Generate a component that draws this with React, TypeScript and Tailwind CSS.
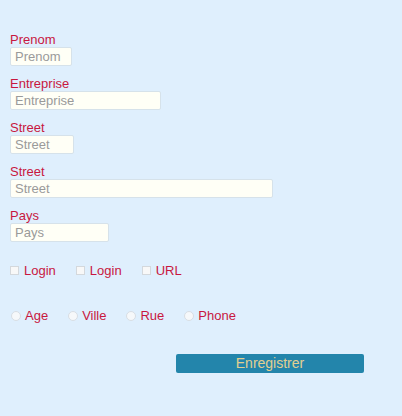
import React from 'react';

const fields = [
  { label: 'Prenom', width: 'w-[62px]' },
  { label: 'Entreprise', width: 'w-[151px]' },
  { label: 'Street', width: 'w-[64px]' },
  { label: 'Street', width: 'w-[263px]' },
  { label: 'Pays', width: 'w-[99px]' },
];

const checks = ['Login', 'Login', 'URL'];
const radios = ['Age', 'Ville', 'Rue', 'Phone'];

const App = () => {
  return (
    <div
      className="flex flex-col w-[402px] h-[416px] bg-[#dfeffd] pt-[32px] pl-[10px] text-[13px]"
      style={{ fontFamily: '"Liberation Sans", Arial, sans-serif' }}
    >
      {/* Champs texte */}
      {fields.map((f, i) => (
        <div key={i} className="mb-[10px]">
          <label className="block h-[15px] leading-[15px] text-[#c8173f]">{f.label}</label>
          <input
            type="text"
            placeholder={f.label}
            className={`${f.width} block h-[19px] px-[4px] bg-[#fffff6] border border-[#d6e2ea] rounded-[2px] text-[13px] leading-[17px] placeholder:text-[#9a9a9a] outline-none`}
          />
        </div>
      ))}

      {/* Cases à cocher */}
      <div className="flex gap-[20px] mt-[11px] h-[15px] leading-[15px]">
        {checks.map((c, i) => (
          <div key={i} className="flex items-center gap-[5px]">
            <span className="block w-[9px] h-[9px] bg-[#f8f8f8] border border-[#d4d8dc]" />
            <span className="text-[#c8173f]">{c}</span>
          </div>
        ))}
      </div>

      {/* Boutons radio */}
      <div className="flex gap-[20px] mt-[30px] h-[15px] leading-[15px] pl-[1px]">
        {radios.map((r, i) => (
          <div key={i} className="flex items-center gap-[4px]">
            <span className="block w-[10px] h-[10px] rounded-full bg-[#f6f8fa] border border-[#d8dee4]" />
            <span className="text-[#c8173f]">{r}</span>
          </div>
        ))}
      </div>

      {/* Bouton */}
      <button
        type="button"
        className="block mt-[31px] ml-[166px] w-[188px] h-[19px] bg-[#2385ab] rounded-[2px] text-[14px] leading-[19px] text-[#e2cf90]"
      >
        Enregistrer
      </button>
    </div>
  );
};

export default App;
